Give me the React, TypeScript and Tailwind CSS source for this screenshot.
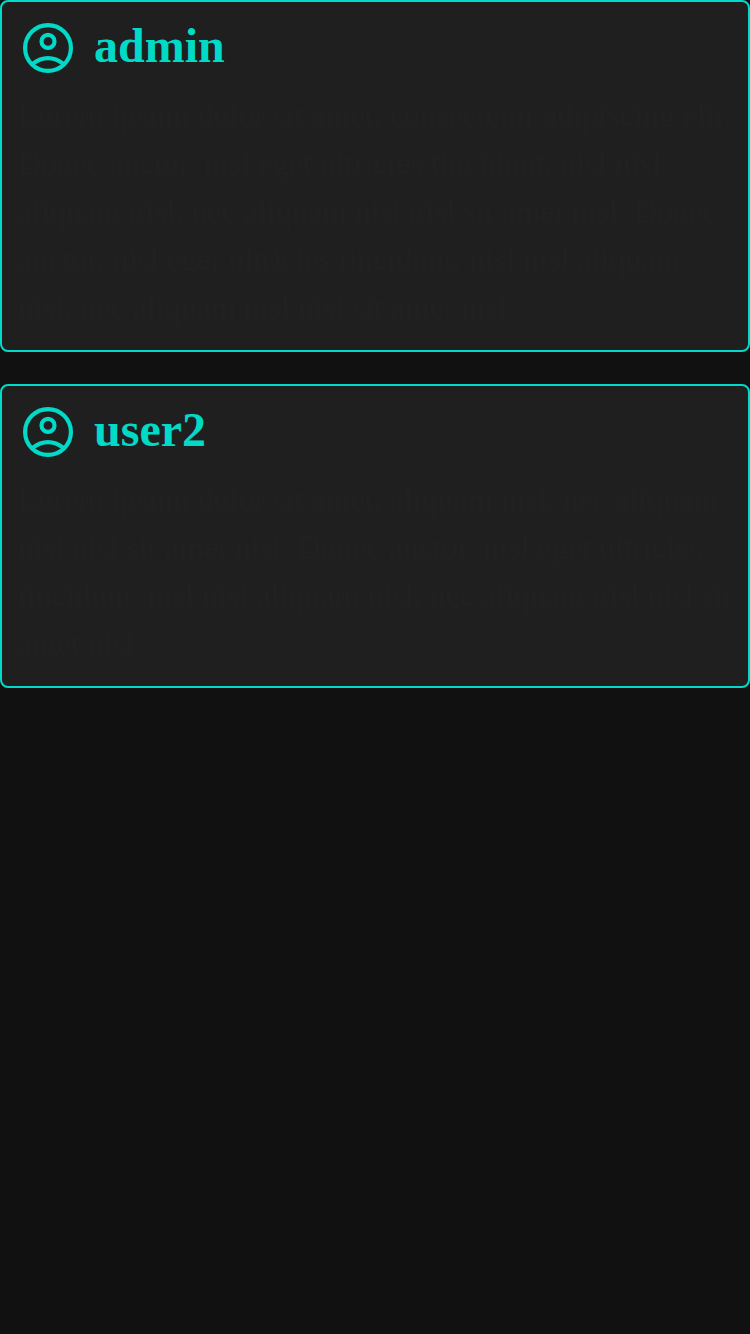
const posts = [
  {
    user: "admin",
    text: "Lorem ipsum dolor sit amet, consectetur adipiscing elit. Donec auctor, nisl eget ultricies tincidunt, nisl nisl aliquam nisl, nec aliquam nisl nisl sit amet nisl. Donec auctor, nisl eget ultricies tincidunt, nisl nisl aliquam nisl, nec aliquam nisl nisl sit amet nisl.",
  },
  {
    user: "user2",
    text: "Lorem ipsum dolor sit amet, aliquam nisl, nec aliquam nisl nisl sit amet nisl. Donec auctor, nisl eget ultricies tincidunt, nisl nisl aliquam nisl, nec aliquam nisl nisl sit amet nisl.",
  },
];

function AccountCircle() {
  return (
    <svg
      className="size-[60px] shrink-0"
      viewBox="0 0 60 60"
      fill="none"
      stroke="currentColor"
      strokeWidth="4.17"
      aria-hidden="true"
    >
      <circle cx="30" cy="30" r="22.92" />
      <circle cx="30" cy="23.4" r="6.5" />
      <path d="M14.6 45.8C19.4 42.1 24.4 40.2 30 40.2S40.6 42.1 45.4 45.8" />
    </svg>
  );
}

export default function App() {
  return (
    <main className="flex min-h-screen flex-col gap-8 bg-[#111111] font-['Liberation_Serif',serif]">
      {posts.map((post) => (
        <article key={post.user} className="rounded-lg border-2 border-[#00dac6] bg-[#1f1f1f] px-4 pt-4 pb-[19px]">
          <header className="flex h-[60px] items-center gap-4 text-[#00dac6]">
            <AccountCircle />
            <h2 className="pb-1 text-[48px] leading-none font-bold">{post.user}</h2>
          </header>
          <p className="mt-[13px] text-[32px] leading-[48px] text-[#212121]">{post.text}</p>
        </article>
      ))}
    </main>
  );
}
